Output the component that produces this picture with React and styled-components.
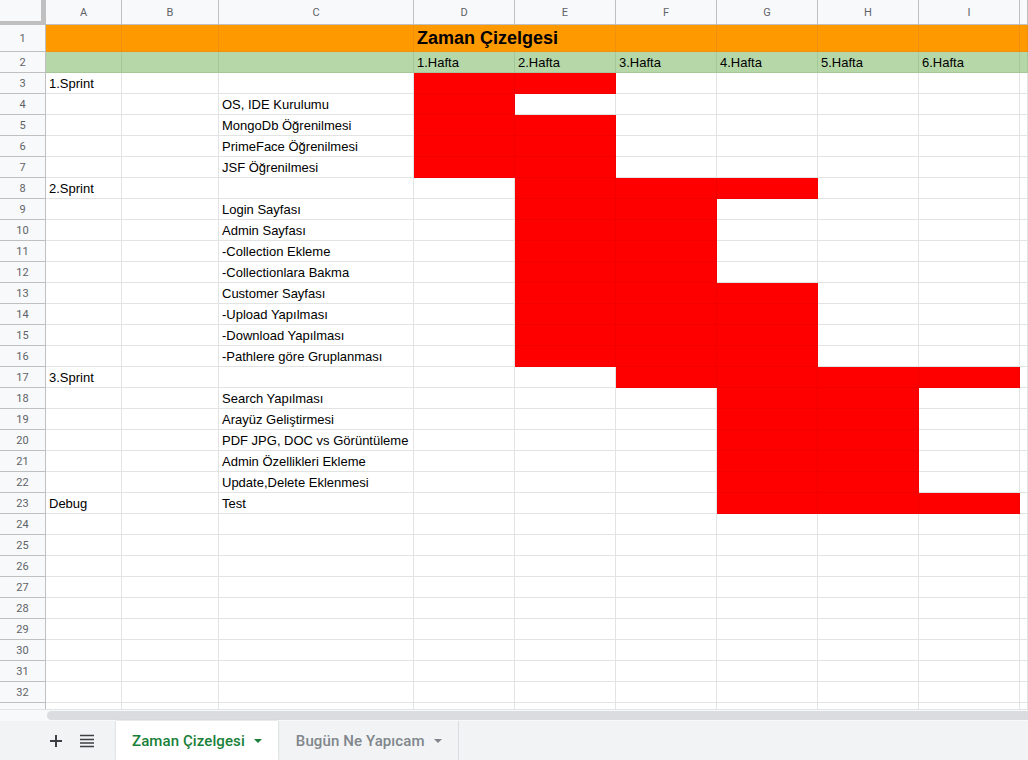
import React from 'react';
import styled, { createGlobalStyle } from 'styled-components';

const GlobalStyle = createGlobalStyle`
  html, body {
    margin: 0;
    padding: 0;
    background: #fff;
  }
  body {
    font-family: 'Liberation Sans', Arial, sans-serif;
  }
`;

const FILLS = {
  orange: { bg: '#ff9900', line: '#ef9010' },
  green: { bg: '#b6d7a8', line: '#a6c898' },
  red: { bg: '#ff0000', line: '#f20000' },
};

const LETTERS = ['A', 'B', 'C', 'D', 'E', 'F', 'G', 'H', 'I', ''];

const rows = [
  { a: '1.Sprint', red: [3, 4] },
  { c: 'OS, IDE Kurulumu', red: [3] },
  { c: 'MongoDb Öğrenilmesi', red: [3, 4] },
  { c: 'PrimeFace Öğrenilmesi', red: [3, 4] },
  { c: 'JSF Öğrenilmesi', red: [3, 4] },
  { a: '2.Sprint', red: [4, 5, 6] },
  { c: 'Login Sayfası', red: [4, 5] },
  { c: 'Admin Sayfası', red: [4, 5] },
  { c: '-Collection Ekleme', red: [4, 5] },
  { c: '-Collectionlara Bakma', red: [4, 5] },
  { c: 'Customer Sayfası', red: [4, 5, 6] },
  { c: '-Upload Yapılması', red: [4, 5, 6] },
  { c: '-Download Yapılması', red: [4, 5, 6] },
  { c: '-Pathlere göre Gruplanması', red: [4, 5, 6] },
  { a: '3.Sprint', red: [5, 6, 7, 8] },
  { c: 'Search Yapılması', red: [6, 7] },
  { c: 'Arayüz Geliştirmesi', red: [6, 7] },
  { c: 'PDF JPG, DOC vs Görüntüleme', red: [6, 7] },
  { c: 'Admin Özellikleri Ekleme', red: [6, 7] },
  { c: 'Update,Delete Eklenmesi', red: [6, 7] },
  { a: 'Debug', c: 'Test', red: [6, 7, 8] },
];

const Page = styled.div`
  width: 1028px;
  height: 760px;
  display: flex;
  flex-direction: column;
  overflow: hidden;
`;

const SheetArea = styled.div`
  flex: 1;
  overflow: hidden;
`;

const Grid = styled.div`
  display: grid;
  grid-template-columns: 46px 76px 97px 195px repeat(6, 101px) 1fr;
  grid-template-rows: 25px 27px;
  grid-auto-rows: 21px;
`;

const Corner = styled.div`
  box-sizing: border-box;
  background: #f8f9fa;
  border-right: 5px solid #c0c0c0;
  border-bottom: 4px solid #c0c0c0;
`;

const HeadCell = styled.div`
  box-sizing: border-box;
  background: #f8f9fa;
  border-right: 1px solid #c0c0c0;
  border-bottom: 1px solid #c0c0c0;
  display: flex;
  align-items: center;
  justify-content: center;
  font-family: Roboto, 'Liberation Sans', Arial, sans-serif;
  font-size: 11px;
  color: #5f6368;
`;

const Cell = styled.div`
  box-sizing: border-box;
  background: ${(p) => (p.$fill ? FILLS[p.$fill].bg : '#fff')};
  border-right: 1px solid ${(p) => (p.$fill ? FILLS[p.$fill].line : '#e2e3e3')};
  border-bottom: 1px solid ${(p) => (p.$fill ? FILLS[p.$fill].line : '#e2e3e3')};
  grid-column: ${(p) => (p.$span ? `span ${p.$span}` : 'auto')};
  display: flex;
  align-items: center;
  padding: 1px 3px 0;
  font-size: ${(p) => (p.$title ? '18px' : '13px')};
  font-weight: ${(p) => (p.$title ? 700 : 400)};
  color: #000;
  white-space: nowrap;
  overflow: hidden;
`;

const ScrollRow = styled.div`
  height: 11px;
  display: flex;
  background: #f8f9fa;
  border-top: 1px solid #e2e3e3;
`;

const Thumb = styled.div`
  flex: 1;
  margin: 1px 0 1px 47px;
  background: #dadce0;
  border-radius: 5px 0 0 5px;
`;

const TabBar = styled.div`
  height: 39px;
  display: flex;
  align-items: stretch;
  background: #f1f3f4;
  padding-left: 40px;
`;

const IconButton = styled.div`
  width: 31px;
  display: flex;
  align-items: center;
  justify-content: center;
`;

const Tab = styled.div`
  display: flex;
  align-items: center;
  gap: 9px;
  padding: 0 16px 0 ${(p) => (p.$active ? '16px' : '18px')};
  margin-left: ${(p) => (p.$active ? '14px' : '0')};
  background: ${(p) => (p.$active ? '#fff' : 'transparent')};
  box-shadow: ${(p) => (p.$active ? '0 0 2px rgba(60,64,67,0.25)' : 'none')};
  border-right: ${(p) => (p.$active ? 'none' : '1px solid #dadce0')};
  font-family: Roboto, 'Liberation Sans', Arial, sans-serif;
  font-size: 15px;
  font-weight: 500;
  letter-spacing: 0.1px;
  color: ${(p) => (p.$active ? '#188038' : '#80868b')};
`;

const Caret = styled.span`
  width: 0;
  height: 0;
  border-left: 4px solid transparent;
  border-right: 4px solid transparent;
  border-top: 4px solid currentColor;
  margin-top: 1px;
`;

function PlusIcon() {
  return (
    <svg width="14" height="14" viewBox="0 0 14 14">
      <path d="M7 1v12M1 7h12" stroke="#3c4043" strokeWidth="2" />
    </svg>
  );
}

function ListIcon() {
  return (
    <svg width="14" height="14" viewBox="0 0 14 14">
      <path d="M0 1.5h14M0 5.5h14M0 9h14M0 12.5h14" stroke="#3c4043" strokeWidth="1.6" />
    </svg>
  );
}

function cellsFor(row) {
  const cells = [];
  for (let col = 0; col < 10; col++) {
    let text = '';
    if (col === 0 && row.a) text = row.a;
    if (col === 2 && row.c) text = row.c;
    const fill = row.red && row.red.includes(col) ? 'red' : null;
    cells.push(
      <Cell key={col} $fill={fill}>
        {text}
      </Cell>
    );
  }
  return cells;
}

function App() {
  const dataRows = [...rows];
  while (dataRows.length < 31) dataRows.push({});

  return (
    <Page>
      <GlobalStyle />
      <SheetArea>
        <Grid>
          <Corner />
          {LETTERS.map((l, i) => (
            <HeadCell key={i}>{l}</HeadCell>
          ))}

          <HeadCell>1</HeadCell>
          <Cell $fill="orange" />
          <Cell $fill="orange" />
          <Cell $fill="orange" />
          <Cell $fill="orange" $title $span={2}>
            Zaman Çizelgesi
          </Cell>
          {[5, 6, 7, 8, 9].map((c) => (
            <Cell key={c} $fill="orange" />
          ))}

          <HeadCell>2</HeadCell>
          <Cell $fill="green" />
          <Cell $fill="green" />
          <Cell $fill="green" />
          {[1, 2, 3, 4, 5, 6].map((n) => (
            <Cell key={n} $fill="green">
              {n}.Hafta
            </Cell>
          ))}
          <Cell $fill="green" />

          {dataRows.map((row, i) => (
            <React.Fragment key={i}>
              <HeadCell>{i < 30 ? i + 3 : ''}</HeadCell>
              {cellsFor(row)}
            </React.Fragment>
          ))}
        </Grid>
      </SheetArea>
      <ScrollRow>
        <Thumb />
      </ScrollRow>
      <TabBar>
        <IconButton>
          <PlusIcon />
        </IconButton>
        <IconButton>
          <ListIcon />
        </IconButton>
        <Tab $active>
          Zaman Çizelgesi
          <Caret />
        </Tab>
        <Tab>
          Bugün Ne Yapıcam
          <Caret />
        </Tab>
      </TabBar>
    </Page>
  );
}

export default App;
